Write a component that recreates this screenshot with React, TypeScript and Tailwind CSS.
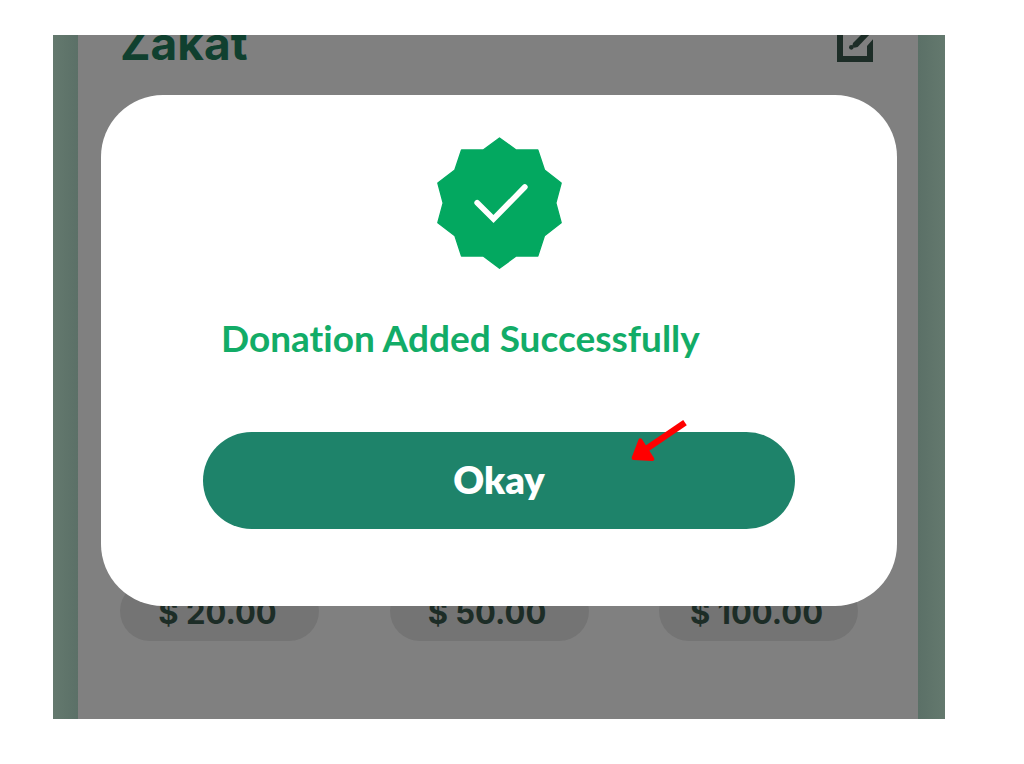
const amounts = ["$ 20.00", "$ 50.00", "$ 100.00"];

function EditIcon() {
  return (
    <svg className="block h-9 w-9" viewBox="0 0 108 108" fill="#1d2d27" aria-hidden="true">
      <path d="M0 0H60L42 18H18V90H90V60L108 40V108H0Z" />
      <path d="M48 51 80 19 104 19 62 63 52 65 46 59Z" />
      <circle cx="43" cy="64" r="7" />
    </svg>
  );
}

function SuccessBadge() {
  return (
    <svg className="block h-[132px] w-[125px]" viewBox="50 36 374 396" role="img" aria-label="Success">
      <path
        d="M237 39 287 75H352L372 135 422 174 406 234 422 293 372 332 352 393H287L237 430 188 393H123L103 332 52 293 68 234 52 174 103 135 123 75H188Z"
        fill="#03a860"
        stroke="#03a860"
        strokeWidth="4"
        strokeLinejoin="round"
      />
      <path d="M170 233 219 282 313 186" fill="none" stroke="#fff" strokeWidth="17" strokeLinecap="round" />
    </svg>
  );
}

function Pointer() {
  return (
    <svg className="pointer-events-none absolute -top-3.5 right-[106px] h-[47px] w-[60px]" viewBox="90 24 180 141" aria-hidden="true">
      <path d="M258 38 140 118" stroke="#f00" strokeWidth="19" />
      <path d="M104 144 124 91 160 147Z" fill="#f00" stroke="#f00" strokeWidth="12" strokeLinejoin="round" />
    </svg>
  );
}

export default function App() {
  return (
    <main className="min-h-screen bg-white pt-[35px] pr-[79px] pb-[45px] pl-[53px]">
      <div className="relative flex overflow-hidden">
        <div className="w-[25px] shrink-0 bg-linear-to-r from-[#64796e] to-[#5b7067]" />
        <section className="flex h-[684px] flex-1 flex-col justify-between bg-[#808080] px-[42px] pb-[78px]">
          <header className="-mt-4 flex items-start justify-between">
            <h1 className="font-['Inter',sans-serif] text-[46px] leading-[48px] font-bold text-[#10402f]">Zakat</h1>
            <button type="button" aria-label="Edit" className="mt-[7px] mr-[3px]">
              <EditIcon />
            </button>
          </header>
          <div className="flex justify-between pr-[18px]">
            {amounts.map((amount) => (
              <button
                key={amount}
                type="button"
                className="h-[60px] w-[199px] rounded-full bg-[#747474] pt-1 pr-1 font-['Inter',sans-serif] text-[31px] leading-9 font-bold text-[#1d2d27]"
              >
                {amount}
              </button>
            ))}
          </div>
        </section>
        <div className="w-[27px] shrink-0 bg-linear-to-r from-[#5b7067] to-[#64796e]" />

        <div
          role="dialog"
          aria-modal="true"
          aria-labelledby="dialog-title"
          className="absolute inset-x-12 top-[60px] flex flex-col items-center rounded-[62px] bg-white px-[102px] pt-[42px] pb-[77px] font-['Lato',sans-serif]"
        >
          <SuccessBadge />
          <h2 id="dialog-title" className="mt-[46px] self-start pl-[18px] text-[37px] leading-[46px] font-bold whitespace-nowrap text-[#12ac67] [font-variant-ligatures:none]">
            Donation Added Successfully
          </h2>
          <div className="relative mt-[71px] w-full">
            <button type="button" className="block h-[97px] w-full rounded-full bg-[#1e836a] pb-1 text-[38px] leading-[46px] font-extrabold text-white">
              Okay
            </button>
            <Pointer />
          </div>
        </div>
      </div>
    </main>
  );
}
